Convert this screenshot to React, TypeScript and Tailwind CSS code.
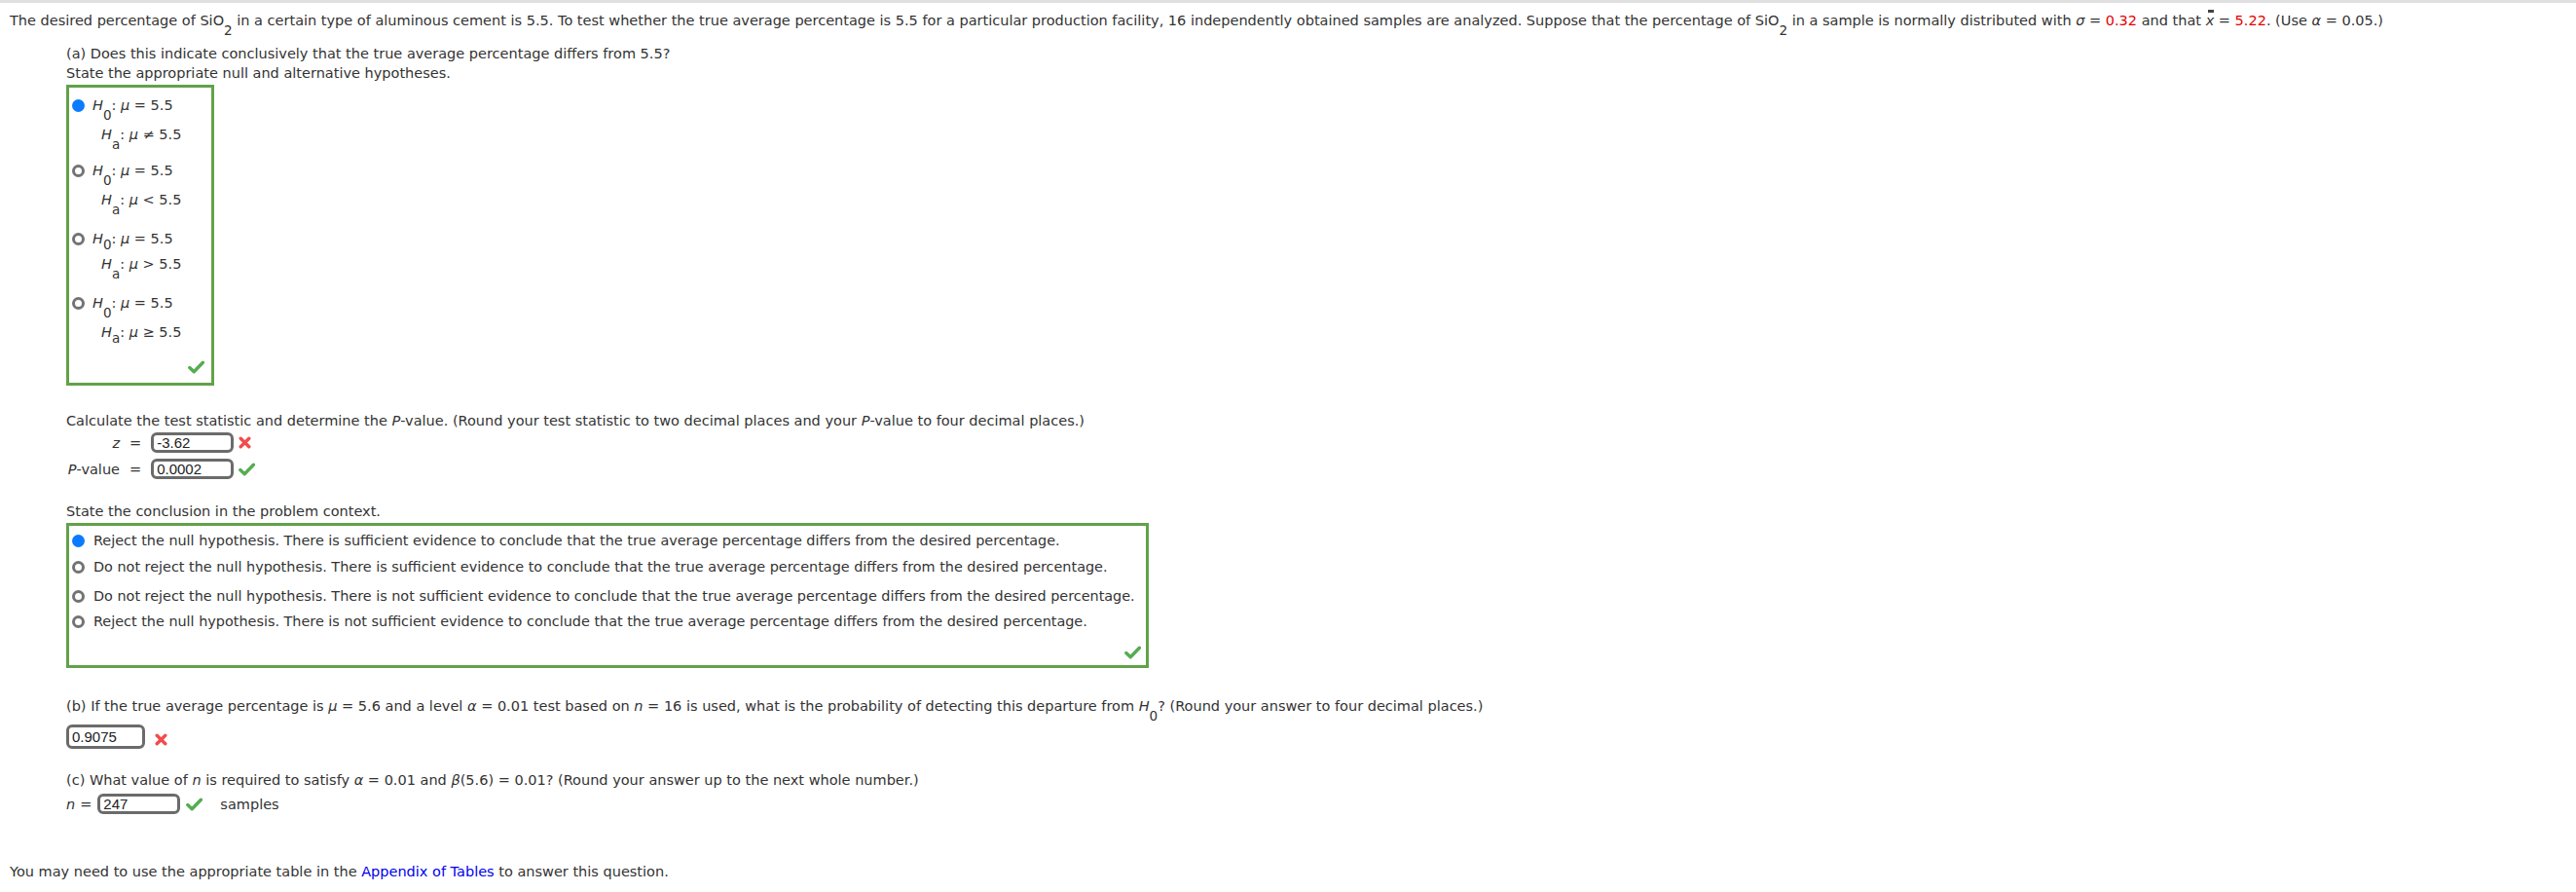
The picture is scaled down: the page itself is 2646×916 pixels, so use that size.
import React from 'react';

const Sub = ({ children, low = true }: { children: React.ReactNode; low?: boolean }) => (
  <span className={`relative text-[13.5px] ${low ? 'top-[10px]' : 'top-[6px]'}`}>{children}</span>
);

const Radio = ({ on = false }: { on?: boolean }) =>
  on ? (
    <span className="inline-block w-[13px] h-[13px] shrink-0 rounded-full bg-[#0b7bff]" />
  ) : (
    <span className="inline-block w-[13px] h-[13px] shrink-0 rounded-full border-[3px] border-[#737373] bg-white" />
  );

const Check = () => (
  <svg width="17" height="14" viewBox="0 0 17 14" className="shrink-0">
    <path d="M1.8 7.6 L6.2 11.8 L15.4 2.2" fill="none" stroke="#55ad4f" strokeWidth="3.4" strokeLinejoin="round" strokeLinecap="round" />
  </svg>
);

const Cross = () => (
  <svg width="13" height="13" viewBox="0 0 13 13" className="shrink-0">
    <path d="M2.2 2.2 L10.8 10.8 M10.8 2.2 L2.2 10.8" stroke="#f24c4c" strokeWidth="3.4" strokeLinecap="round" />
  </svg>
);

const Answer = ({ value, w = 'w-[85px]', h = 'h-[21px]' }: { value: string; w?: string; h?: string }) => (
  <div
    className={`${w} ${h} shrink-0 flex items-center rounded-[6px] border-[3px] border-[#6b6b6b] bg-white pl-[3px] font-['Liberation_Sans',Arial,sans-serif] text-[15px] text-[#222]`}
  >
    {value}
  </div>
);

const H = ({ sub }: { sub: React.ReactNode }) => (
  <>
    <span className="italic">H</span>
    {sub}
  </>
);

const Mu = () => <span className="italic">μ</span>;

const hypotheses = [
  { on: true, rel: '=', alt: '≠', top: 'mt-[8px]', altTop: 'mt-[10px]', subLow: true, altLow: true },
  { on: false, rel: '=', alt: '<', top: 'mt-[17px]', altTop: 'mt-[10px]', subLow: true, altLow: true },
  { on: false, rel: '=', alt: '>', top: 'mt-[20px]', altTop: 'mt-[6px]', subLow: false, altLow: true },
  { on: false, rel: '=', alt: '≥', top: 'mt-[20px]', altTop: 'mt-[10px]', subLow: true, altLow: false },
];

const conclusions = [
  { on: true, mt: 'mt-[5px]', text: 'Reject the null hypothesis. There is sufficient evidence to conclude that the true average percentage differs from the desired percentage.' },
  { on: false, mt: 'mt-[7px]', text: 'Do not reject the null hypothesis. There is sufficient evidence to conclude that the true average percentage differs from the desired percentage.' },
  { on: false, mt: 'mt-[10px]', text: 'Do not reject the null hypothesis. There is not sufficient evidence to conclude that the true average percentage differs from the desired percentage.' },
  { on: false, mt: 'mt-[6px]', text: 'Reject the null hypothesis. There is not sufficient evidence to conclude that the true average percentage differs from the desired percentage.' },
];

export default function App() {
  return (
    <div className="min-h-screen bg-white border-t-[3px] border-[#e0e0e0] font-['DejaVu_Sans',Verdana,sans-serif] text-[14.5px] leading-[20px] text-[#333] whitespace-nowrap">
      <div className="pl-[10px] pt-[8px]">
        {/* Problem statement */}
        <p>
          The desired percentage of SiO<Sub>2</Sub> in a certain type of aluminous cement is 5.5. To test whether the true
          average percentage is 5.5 for a particular production facility, 16 independently obtained samples are analyzed.
          Suppose that the percentage of SiO<Sub>2</Sub> in a sample is normally distributed with{' '}
          <span className="italic">σ</span> = <span className="text-[#e60000]">0.32</span> and that{' '}
          <span className="relative italic">
            x
            <span className="absolute left-[2px] top-[-3px] w-[6px] h-[3px] bg-[#444]" />
          </span>{' '}
          = <span className="text-[#e60000]">5.22</span>. (Use <span className="italic">α</span> = 0.05.)
        </p>

        <div className="pl-[58px]">
          {/* Part (a) */}
          <p className="mt-[14px]">(a) Does this indicate conclusively that the true average percentage differs from 5.5?</p>
          <p>State the appropriate null and alternative hypotheses.</p>

          <div className="mt-[2px] w-[152px] h-[309px] border-[3px] border-[#62a249] flex flex-col">
            {hypotheses.map((o, i) => (
              <div key={i}>
                <div className={`${o.top} h-[20px] flex items-center pl-[3px]`}>
                  <Radio on={o.on} />
                  <span className="ml-[8px]">
                    <H sub={<Sub low={o.subLow}>0</Sub>} />: <Mu /> {o.rel} 5.5
                  </span>
                </div>
                <div className={`${o.altTop} h-[20px] flex items-center pl-[33px]`}>
                  <span>
                    <H sub={<Sub low={o.altLow}>a</Sub>} />: <Mu /> {o.alt} 5.5
                  </span>
                </div>
              </div>
            ))}
            <div className="mt-[19px] flex justify-end pr-[7px]">
              <Check />
            </div>
          </div>

          {/* Test statistic */}
          <p className="mt-[26px]">
            Calculate the test statistic and determine the <span className="italic">P</span>-value. (Round your test statistic
            to two decimal places and your <span className="italic">P</span>-value to four decimal places.)
          </p>
          <div className="mt-[2px] flex items-center">
            <div className="w-[55px] text-right italic">z</div>
            <span className="mx-[10px]">=</span>
            <Answer value="-3.62" />
            <span className="ml-[5px]">
              <Cross />
            </span>
          </div>
          <div className="mt-[6px] flex items-center">
            <div className="w-[55px] text-right">
              <span className="italic">P</span>-value
            </div>
            <span className="mx-[10px]">=</span>
            <Answer value="0.0002" />
            <span className="ml-[5px]">
              <Check />
            </span>
          </div>

          {/* Conclusion */}
          <p className="mt-[23px]">State the conclusion in the problem context.</p>
          <div className="mt-[2px] w-[1112px] h-[149px] border-[3px] border-[#62a249] flex flex-col text-[14.4px]">
            {conclusions.map((c, i) => (
              <div key={i} className={`${c.mt} h-[20px] flex items-center pl-[3px]`}>
                <Radio on={c.on} />
                <span className="ml-[9px]">{c.text}</span>
              </div>
            ))}
            <div className="mt-[15px] flex justify-end pr-[5px]">
              <Check />
            </div>
          </div>

          {/* Part (b) */}
          <p className="mt-[29px]">
            (b) If the true average percentage is <Mu /> = 5.6 and a level <span className="italic">α</span> = 0.01 test based on{' '}
            <span className="italic">n</span> = 16 is used, what is the probability of detecting this departure from{' '}
            <H sub={<Sub>0</Sub>} />? (Round your answer to four decimal places.)
          </p>
          <div className="mt-[9px] flex items-center">
            <Answer value="0.9075" w="w-[81px]" h="h-[25px]" />
            <span className="ml-[10px] mt-[6px]">
              <Cross />
            </span>
          </div>

          {/* Part (c) */}
          <p className="mt-[22px]">
            (c) What value of <span className="italic">n</span> is required to satisfy <span className="italic">α</span> = 0.01
            and <span className="italic">β</span>(5.6) = 0.01? (Round your answer up to the next whole number.)
          </p>
          <div className="mt-[4px] flex items-center">
            <span className="italic">n</span>
            <span className="ml-[5px] mr-[6px]">=</span>
            <Answer value="247" />
            <span className="ml-[6px]">
              <Check />
            </span>
            <span className="ml-[18px]">samples</span>
          </div>
        </div>

        <p className="mt-[49px]">
          You may need to use the appropriate table in the{' '}
          <span className="text-[#0000ee]">Appendix of Tables</span> to answer this question.
        </p>
      </div>
    </div>
  );
}
